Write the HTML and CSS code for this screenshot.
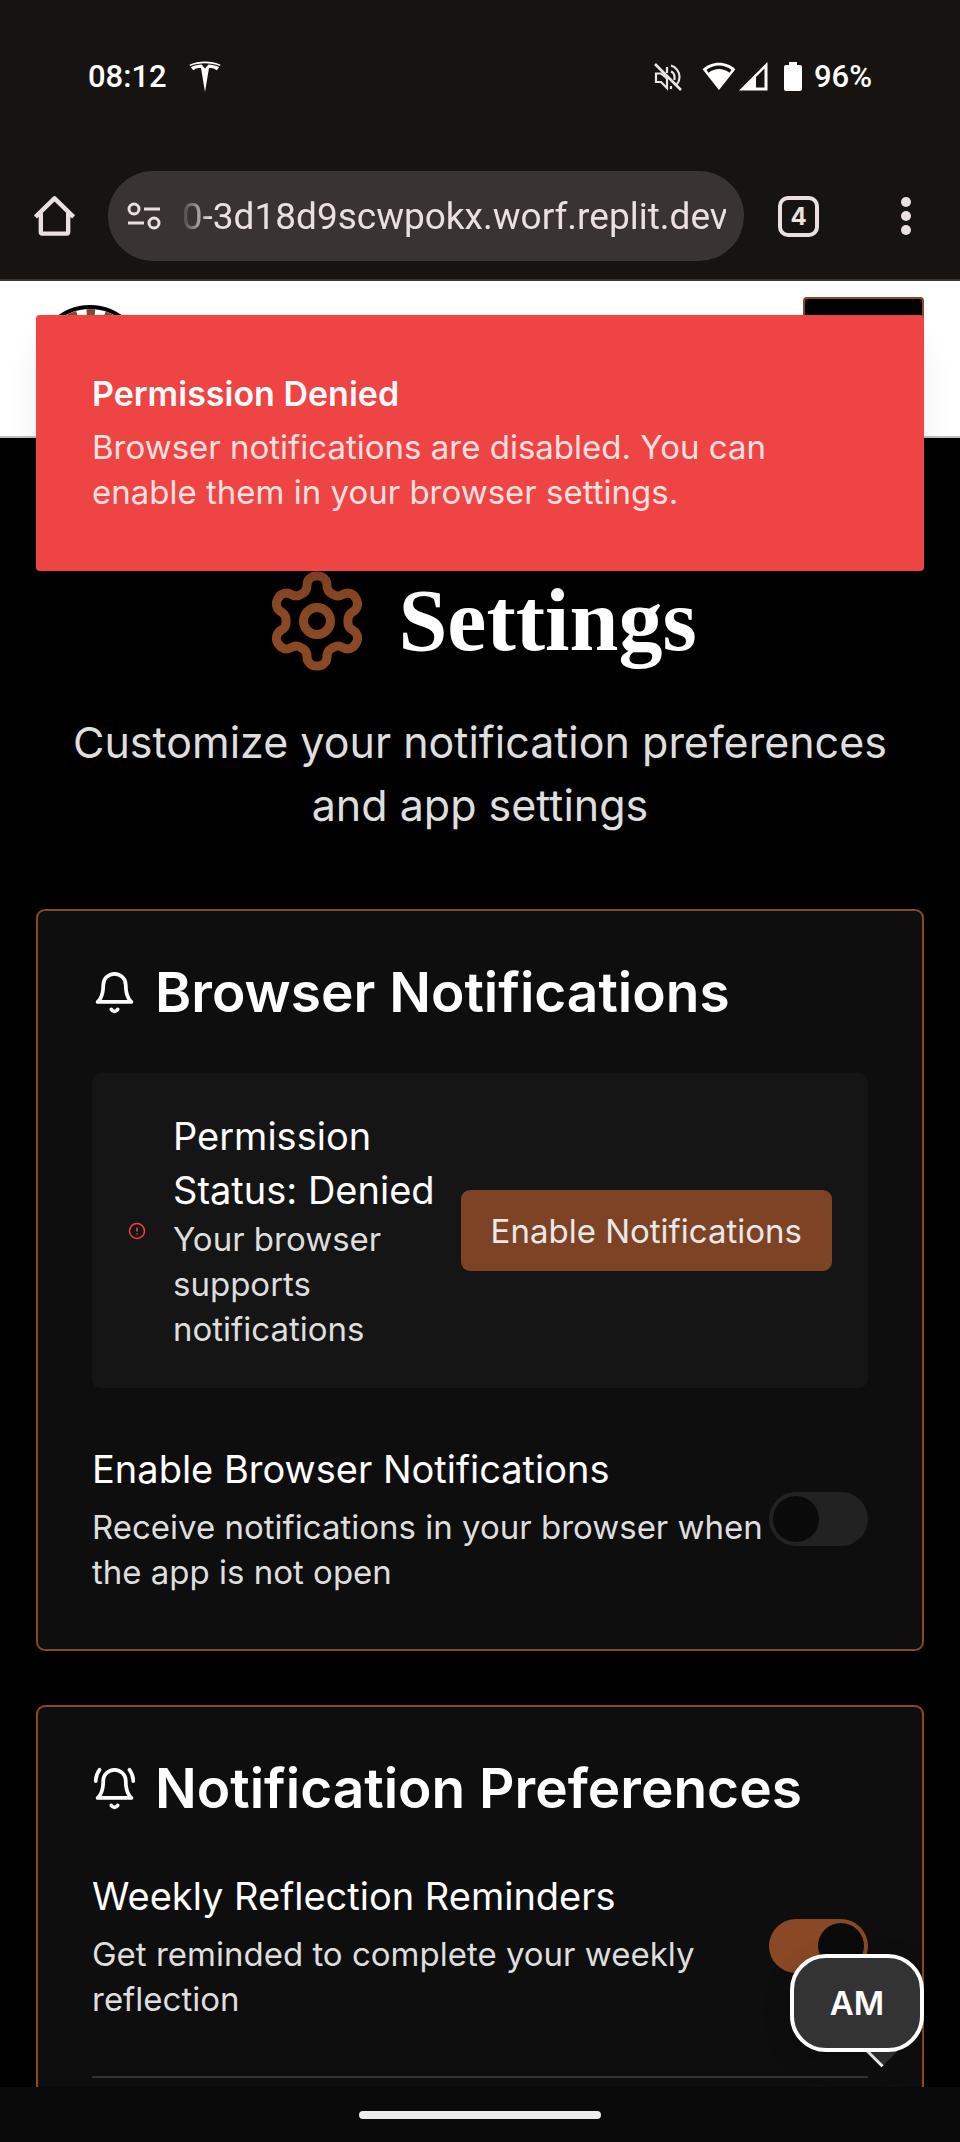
FILE: index.html
```html
<!DOCTYPE html>
<html lang="en">
<head>
<meta charset="utf-8">
<meta name="viewport" content="width=device-width, initial-scale=1">
<title>Settings</title>
<link rel="stylesheet" href="styles.css">
</head>
<body>
<div class="screen">
  <div class="chrome">
    <div class="status">
      <span class="clock">08:12</span>
      <svg class="brand" viewBox="0 0 32 32" fill="#fff"><path d="M.5 3.700C10-.600 22-.600 31.500 3.700L31 5C22 1.200 10 1.200 1 5z"/><path d="M2 6C5 4.600 9 3.500 12.600 3.400L16 7.500l3.400-4.100C23 3.500 27 4.600 30 6c-.5 1.600-1.500 2.700-2.800 3.300C26.500 7.500 23 6.900 20 6.900L16 31 12 6.900c-3 0-6.500.6-7.200 2.400C3.500 8.700 2.500 7.600 2 6z"/></svg>
      <span class="spacer"></span>
      <svg class="mute" viewBox="0 0 28 28" fill="none" stroke="#e6e6e6" stroke-width="2.200"><path d="M2 10.500h5l6 5V25l-6-6H2z"/><path d="M13 4v6M17 2.500a12 12 0 0 1 8.500 11.500c0 3-1 5.500-2.600 7.400M17 8.500a6 6 0 0 1 3.500 5.500v3M17 23v3"/><path d="M1 1l26 26" stroke-width="2.600"/></svg>
      <svg class="wifi" viewBox="0 0 34 30"><path fill="#fff" d="M0 7.500C9-1.500 25-1.500 34 7.500L17 29z"/><path fill="#171310" d="M4 8.300C11 2 23 2 30 8.300L27.800 11C21 6 13 6 6.200 11z"/></svg>
      <svg class="signal" viewBox="0 0 29 29"><path fill="#fff" d="M28.500 0v28.500H0z"/><path fill="#171310" d="M17 15l8.500-8.500v19H17z"/></svg>
      <svg class="battery" viewBox="0 0 18 29" fill="#fff"><path d="M5 0h8v3H5z"/><rect y="3" width="18" height="26" rx="2"/></svg>
      <span class="clock">96%</span>
    </div>
    <div class="toolbar">
      <button class="tool" aria-label="Home"><svg class="home" viewBox="0 0 42 42" fill="none" stroke="#ebe0dd" stroke-width="4.500" stroke-linejoin="round"><path d="M1.500 22L21 3l19.500 19M7 18v19.500q0 1.500 1.500 1.500h25q1.500 0 1.500-1.500V18"/></svg></button>
      <div class="address">
        <svg class="tune" viewBox="0 0 34 28" fill="none" stroke="#ebe0dd" stroke-width="3"><circle cx="7" cy="7" r="5"/><path d="M17 7h16M1 21h16"/><circle cx="27" cy="21" r="5"/></svg>
        <input class="url" type="text" aria-label="Address" value="00-3d18d9scwpokx.worf.replit.dev">
      </div>
      <button class="tool tabs" aria-label="Open tabs">4</button>
      <button class="tool more" aria-label="Menu"><svg class="dots" viewBox="0 0 10 38" fill="#ebe0dd"><circle cx="5" cy="5" r="5"/><circle cx="5" cy="19" r="5"/><circle cx="5" cy="33" r="5"/></svg></button>
    </div>
  </div>

  <div class="page">
    <header class="site">
      <svg class="logo" viewBox="0 0 108 108"><circle cx="54" cy="54" r="52" fill="#fff" stroke="#000" stroke-width="4"/><circle cx="54" cy="54" r="27" fill="none" stroke="#7e4a33" stroke-width="46" stroke-dasharray="5 5.603" stroke-dashoffset="2.500"/></svg>
      <button class="menu" aria-label="Menu"></button>
    </header>

    <main class="content">
      <div class="title">
        <svg class="gear" viewBox="0 0 24 24" fill="none" stroke="currentColor" stroke-width="2" stroke-linecap="round" stroke-linejoin="round"><path d="M12.220 2h-.44a2 2 0 0 0-2 2v.18a2 2 0 0 1-1 1.730l-.43.25a2 2 0 0 1-2 0l-.15-.08a2 2 0 0 0-2.730.73l-.22.38a2 2 0 0 0 .73 2.730l.15.1a2 2 0 0 1 1 1.720v.51a2 2 0 0 1-1 1.740l-.15.09a2 2 0 0 0-.73 2.730l.22.38a2 2 0 0 0 2.730.73l.15-.08a2 2 0 0 1 2 0l.43.25a2 2 0 0 1 1 1.730V20a2 2 0 0 0 2 2h.44a2 2 0 0 0 2-2v-.18a2 2 0 0 1 1-1.730l.43-.25a2 2 0 0 1 2 0l.15.08a2 2 0 0 0 2.730-.73l.22-.39a2 2 0 0 0-.73-2.730l-.15-.08a2 2 0 0 1-1-1.740v-.5a2 2 0 0 1 1-1.740l.15-.09a2 2 0 0 0 .73-2.730l-.22-.38a2 2 0 0 0-2.730-.73l-.15.08a2 2 0 0 1-2 0l-.43-.25a2 2 0 0 1-1-1.730V4a2 2 0 0 0-2-2z"/><circle cx="12" cy="12" r="3"/></svg>
        <h1>Settings</h1>
      </div>
      <p class="lead">Customize your notification preferences and app settings</p>

      <section class="card">
        <h2><svg class="bell" viewBox="0 0 24 24" fill="none" stroke="currentColor" stroke-width="2" stroke-linecap="round" stroke-linejoin="round"><path d="M6 8a6 6 0 0 1 12 0c0 7 3 9 3 9H3s3-2 3-9"/><path d="M10.300 21a1.940 1.940 0 0 0 3.400 0"/></svg>Browser Notifications</h2>
        <div class="permission">
          <svg class="alert" viewBox="0 0 24 24" fill="none" stroke="currentColor" stroke-width="2" stroke-linecap="round" stroke-linejoin="round"><circle cx="12" cy="12" r="10"/><path d="M12 8v4M12 16h.01"/></svg>
          <div class="permission-text">
            <p class="label">Permission Status: Denied</p>
            <p class="hint">Your browser supports notifications</p>
          </div>
          <button class="enable">Enable Notifications</button>
        </div>
        <div class="row">
          <div class="row-text">
            <label class="label" for="browser-notifications">Enable Browser Notifications</label>
            <p class="hint">Receive notifications in your browser when the app is not open</p>
          </div>
          <input class="switch" type="checkbox" role="switch" id="browser-notifications">
        </div>
      </section>

      <section class="card">
        <h2><svg class="bell" viewBox="0 0 24 24" fill="none" stroke="currentColor" stroke-width="2" stroke-linecap="round" stroke-linejoin="round"><path d="M6 8a6 6 0 0 1 12 0c0 7 3 9 3 9H3s3-2 3-9"/><path d="M10.300 21a1.940 1.940 0 0 0 3.400 0"/><path d="M4 2C2.800 3.700 2 5.700 2 8M22 8c0-2.300-.8-4.300-2-6"/></svg>Notification Preferences</h2>
        <div class="row">
          <div class="row-text">
            <label class="label" for="weekly">Weekly Reflection Reminders</label>
            <p class="hint">Get reminded to complete your weekly reflection</p>
          </div>
          <input class="switch" type="checkbox" role="switch" id="weekly" checked>
        </div>
        <hr class="divider">
      </section>
    </main>

    <div class="toast" role="alert">
      <p class="toast-title">Permission Denied</p>
      <p class="toast-text">Browser notifications are disabled. You can enable them in your browser settings.</p>
    </div>
    <button class="bubble"><span class="bubble-face">AM</span></button>
  </div>

  <div class="navbar"><span class="handle"></span></div>
</div>
</body>
</html>
```

FILE: styles.css
```css
:root {
  --brown: #8a4825;
  --chrome: #171310;
  --chrome-text: #ebe0dd;
  --card: #0e0e0e;
  --muted: #dedede;
  --sans: Inter, "Open Sans", "Liberation Sans", sans-serif;
}
* { box-sizing: border-box; }
body, h1, h2, p { margin: 0; }
body { background: #000; color: #fff; font-family: var(--sans); }
button { border: 0; padding: 0; background: none; color: inherit; font-family: inherit; }
svg { display: block; flex: none; }

.screen { display: flex; flex-direction: column; height: 100vh; overflow: hidden; }

/* Phone status bar and browser toolbar */
.chrome { background: var(--chrome); border-bottom: 2px solid #393431; }
.status { display: flex; align-items: center; height: 153px; padding: 0 88px; }
.clock { font-family: Roboto, sans-serif; font-size: 31px; font-weight: 500; }
.brand { width: 32px; height: 32px; margin-left: 22px; }
.spacer { flex: 1; }
.mute { width: 28px; height: 28px; margin-right: 20px; }
.wifi { width: 34px; height: 29px; margin-right: 3px; }
.signal { width: 29px; height: 29px; margin-right: 16px; }
.battery { width: 18px; height: 29px; margin-right: 12px; }
.toolbar { display: flex; align-items: center; height: 126px; padding: 0 34px; }
.tool { flex: none; color: var(--chrome-text); }
.home { width: 41px; height: 42px; }
.address {
  display: flex; align-items: center; flex: 1; min-width: 0; height: 90px;
  margin: 0 34px 0 33px; padding: 0 18px 0 19px; border-radius: 45px; background: #393431;
}
.tune { width: 34px; height: 28px; }
.url {
  flex: 1; min-width: 0; height: 60px; padding: 0; border: 0; outline: 0; background: none;
  color: var(--chrome-text); font-family: Roboto, sans-serif; font-size: 37px; text-align: right;
  -webkit-mask-image: linear-gradient(to right, transparent 18px, #000 50px);
  mask-image: linear-gradient(to right, transparent 18px, #000 50px);
}
.tabs {
  width: 41px; height: 41px; border: 4px solid var(--chrome-text); border-radius: 10px;
  font-size: 24px; font-weight: 700; line-height: 33px;
}
.more { margin: 0 15px 0 82px; }
.dots { width: 10px; height: 38px; }

/* Web page */
.page { position: relative; flex: 1; min-height: 0; overflow: hidden; }
.site {
  display: flex; align-items: center; justify-content: space-between; height: 157px;
  padding: 0 36px; background: #fff; border-bottom: 2px solid #bfbfbf;
}
.logo { width: 108px; height: 108px; }
.menu { width: 121px; height: 123px; border: 2px solid var(--brown); border-radius: 4px; background: #000; }
.content { display: flex; flex-direction: column; padding: 129px 36px 54px; }
.title { display: flex; align-items: center; justify-content: center; gap: 27px; height: 108px; margin-bottom: 36px; }
.gear { width: 108px; height: 108px; color: var(--brown); }
h1 { font-family: "Liberation Serif", serif; font-size: 88px; font-weight: 700; line-height: 90px; }
.lead { margin-bottom: 72px; padding: 0 27px; color: var(--muted); font-size: 43px; line-height: 63px; text-align: center; }

.card { margin-bottom: 54px; padding: 54px; border: 2px solid var(--brown); border-radius: 9px; background: var(--card); }
h2 { display: flex; align-items: center; gap: 18px; margin-bottom: 54px; font-size: 55px; font-weight: 600; line-height: 54px; white-space: nowrap; }
.bell { width: 45px; height: 45px; }
.label { display: block; font-size: 38px; line-height: 54px; }
.hint { color: var(--muted); font-size: 33px; line-height: 45px; }
.permission { display: flex; align-items: center; margin-bottom: 54px; padding: 36px; border-radius: 9px; background: #151515; }
.alert { width: 18px; height: 18px; margin-right: 27px; color: #ef4444; }
.permission-text { flex: 1; min-width: 0; }
.enable { flex: none; height: 81px; padding: 0 30px; border-radius: 9px; background: #7e4324; color: #e8e8e8; font-size: 33px; }
.row { display: flex; align-items: center; justify-content: space-between; }
.row-text { flex: 1; min-width: 0; }
.row .hint { margin-top: 9px; }
.switch { flex: none; appearance: none; width: 99px; height: 54px; margin: 0; padding: 4px; border-radius: 27px; background: #222; }
.switch::before { content: ""; display: block; width: 46px; height: 46px; border-radius: 50%; background: #0a0a0a; }
.switch:checked { background: var(--brown); }
.switch:checked::before { margin-left: auto; }
.divider { width: 100%; height: 2px; margin: 54px 0 0; border: 0; background: #333; }

/* Overlays */
.toast {
  position: absolute; top: 34px; left: 36px; right: 36px; padding: 56px;
  border-radius: 4px; background: #ef4444; font-size: 33px; line-height: 45px;
  box-shadow: 0 22px 34px -7px rgba(0, 0, 0, .1), 0 9px 14px -9px rgba(0, 0, 0, .1);
}
.toast-title { margin-bottom: 9px; color: #fafafa; font-size: 34px; font-weight: 600; }
.toast-text { color: #fde0e0; }
.bubble { position: absolute; right: 36px; bottom: 35px; width: 134px; height: 98px; }
.bubble::after {
  content: ""; position: absolute; right: 25px; bottom: -8px; width: 30px; height: 30px;
  border-left: 3px solid #fff; background: #333; transform: rotate(-45deg);
}
.bubble-face {
  position: relative; z-index: 1; display: flex; align-items: center; justify-content: center;
  height: 100%; border: 4px solid #fff; border-radius: 36px; background: #333;
  font-size: 33px; font-weight: 600; box-shadow: 0 9px 27px rgba(0, 0, 0, .2);
}

.navbar { display: flex; align-items: center; justify-content: center; height: 55px; background: #0a0a0a; }
.handle { width: 242px; height: 8px; border-radius: 4px; background: #ececec; }
```
